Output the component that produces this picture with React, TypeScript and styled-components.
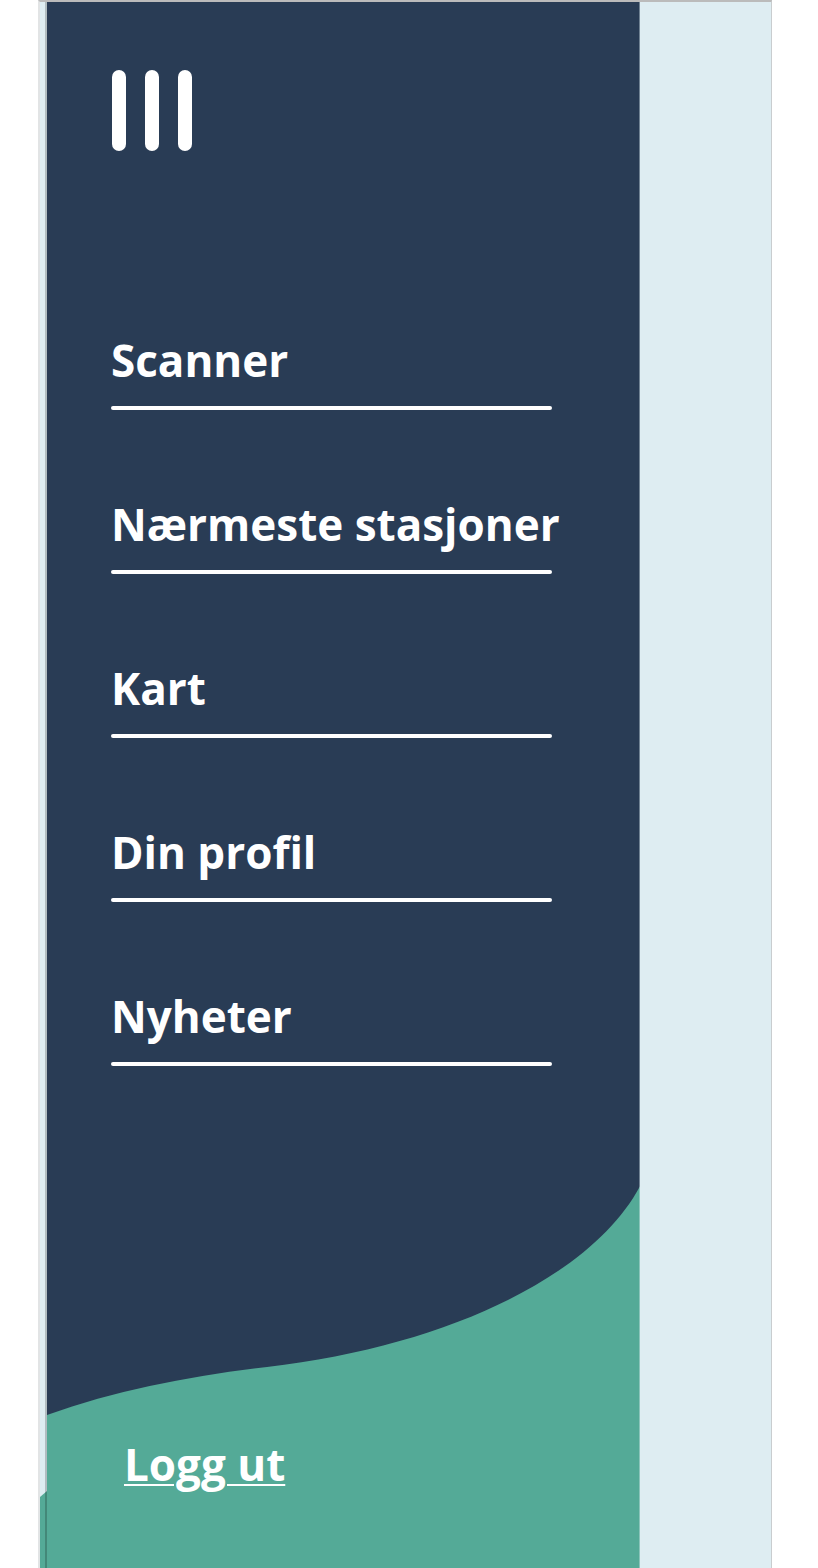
import React from "react";
import styled, { createGlobalStyle } from "styled-components";

const GlobalStyle = createGlobalStyle`
  * { box-sizing: border-box; }
  body { margin: 0; background: #ffffff; font-family: "Open Sans", "Noto Sans", sans-serif; }
`;

const Screen = styled.div`
  display: flex;
  min-height: 100vh;
  margin: 0 46px 0 38px;
  background: #deedf2;
  border-top: 2px solid #bbbbbb;
  border-left: 2px solid #e2e4e5;
  border-right: 1px solid #c9cdcf;
`;

const Edge = styled.div`
  position: relative;
  display: flex;
  flex-direction: column;
  justify-content: flex-end;
  flex: 0 0 7px;

  &::after {
    content: "";
    position: absolute;
    inset: 0 0 0 auto;
    width: 2px;
    background: rgba(0, 0, 0, 0.2);
  }
`;

const EdgeWave = styled.svg`
  display: block;
  width: 100%;
  height: 78px;
`;

const Drawer = styled.aside`
  position: relative;
  display: flex;
  flex-direction: column;
  flex: 0 0 calc(81% + 1px);
  min-width: 0;
  background: #293c55;
  color: #ffffff;

  &::after {
    content: "";
    position: absolute;
    inset: 0 0 0 auto;
    width: 1px;
    background: rgba(222, 237, 242, 0.4);
  }
`;

const MenuButton = styled.button`
  display: flex;
  gap: 19px;
  margin: 68px 65px 0;
  padding: 0;
  border: 0;
  background: none;
  align-self: flex-start;
  cursor: pointer;
`;

const Bar = styled.span`
  width: 14px;
  height: 81px;
  border-radius: 7px;
  background: #ffffff;
`;

const Nav = styled.nav`
  display: flex;
  flex-direction: column;
  gap: 84px;
  margin: 179px 88px 0 64px;
`;

const NavLink = styled.a`
  display: flex;
  flex-direction: column;
  gap: 16px;
  color: inherit;
  font-size: 44px;
  font-weight: 700;
  line-height: 60px;
  white-space: nowrap;
  text-decoration: none;

  &::after {
    content: "";
    height: 4px;
    border-radius: 2px;
    background: #ffffff;
  }
`;

const Wave = styled.svg`
  display: block;
  width: 100%;
  height: 230px;
  margin-top: auto;
`;

const Footer = styled.footer`
  height: 152px;
  padding: 18px 77px;
  background: #54aa97;
`;

const LogoutLink = styled.a`
  color: #ffffff;
  font-size: 44px;
  font-weight: 700;
  line-height: 60px;
  text-decoration: underline;
  text-decoration-thickness: 2px;
  text-underline-offset: 3px;
`;

const items = ["Scanner", "Nærmeste stasjoner", "Kart", "Din profil", "Nyheter"];

export default function App() {
  return (
    <>
      <GlobalStyle />
      <Screen>
        <Edge>
          <EdgeWave viewBox="0 0 7 78" preserveAspectRatio="none" aria-hidden="true">
            <path d="M0 7L7 1V78H0Z" fill="#54aa97" />
          </EdgeWave>
        </Edge>
        <Drawer>
          <MenuButton type="button" aria-label="Meny">
            <Bar />
            <Bar />
            <Bar />
          </MenuButton>
          <Nav>
            {items.map((item) => (
              <NavLink key={item} href="#">{item}</NavLink>
            ))}
          </Nav>
          <Wave viewBox="0 0 593 230" preserveAspectRatio="none" aria-hidden="true">
            <path d="M0 229C70 204 145 190 220 181C400 160 545 90 593 0V230H0Z" fill="#54aa97" />
          </Wave>
          <Footer>
            <LogoutLink href="#">Logg ut</LogoutLink>
          </Footer>
        </Drawer>
      </Screen>
    </>
  );
}
